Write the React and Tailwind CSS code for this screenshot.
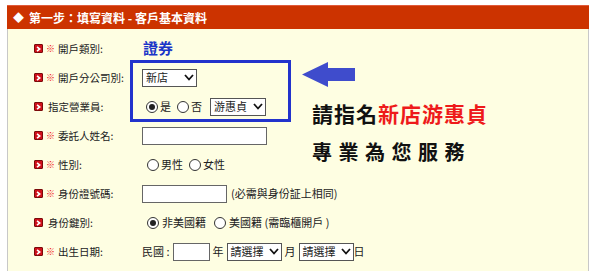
import React from "react";

const font = { fontFamily: '"Noto Sans CJK TC", "Liberation Sans", sans-serif' };

const Bullet = () => (
  <span className="inline-flex items-center justify-center w-[9px] h-[9px] bg-[#d0101a] border border-[#7a0a0a] rounded-[1px]">
    <svg width="5" height="6" viewBox="0 0 5 6">
      <path d="M1 0.8 L3.8 3 L1 5.2" stroke="#fff" strokeWidth="1.6" fill="none" />
    </svg>
  </span>
);

const Radio = ({ checked }) => (
  <span className="inline-flex items-center justify-center w-[12px] h-[12px] rounded-full border border-[#333] bg-white">
    {checked && <span className="w-[6px] h-[6px] rounded-full bg-[#222]" />}
  </span>
);

const Select = ({ text, w }) => (
  <span className={`inline-flex items-center justify-between h-[18px] border border-[#555] bg-white pl-[3px] pr-[2px] ${w}`}>
    <span className="leading-none">{text}</span>
    <svg width="10" height="7" viewBox="0 0 10 7">
      <path d="M1 1 L5 5.5 L9 1" stroke="#111" strokeWidth="1.8" fill="none" />
    </svg>
  </span>
);

const Input = ({ w }) => <span className={`inline-block h-[18px] border border-[#666] bg-white ${w}`} />;

const Row = ({ req, label, children }) => (
  <div className="flex items-center h-[29px]">
    <div className="flex items-center w-[134px] pl-[26px]">
      <Bullet />
      {req && (
        <span className="ml-[3px] w-[8px] overflow-visible text-[#f01010] text-[9px] font-bold leading-none">※</span>
      )}
      <span className={`${req ? "ml-[4px]" : "ml-[5px]"} text-[10.5px] whitespace-nowrap`}>{label}</span>
    </div>
    <div className="flex items-center">{children}</div>
  </div>
);

const App = () => {
  return (
    <div className="w-[600px] h-[271px] bg-white pt-[5px] pl-[7px] text-[11px] text-[#222] overflow-hidden" style={font}>
      <div className="w-[582px]">
        <div className="h-[24px] bg-[#cc3300] border-t border-[#e05a3a] flex items-center pl-[6px] text-white font-bold text-[12px]">
          <span className="text-[11px] mr-[5px]">◆</span>
          第一步：填寫資料 - 客戶基本資料
        </div>
        <div className="relative bg-[#fefee2] border-l border-r border-[#c8c8c8] pt-[5px] h-[250px]">
          <Row req label="開戶類別:">
            <span className="ml-[1px] text-[#1a35c8] font-bold text-[15px]">證券</span>
          </Row>
          <Row req label="開戶分公司別:">
            <Select text="新店" w="w-[55px]" />
          </Row>
          <Row label="指定營業員:">
            <span className="ml-[4px] flex items-center gap-[2px]">
              <Radio checked />是<span className="w-[2px]" /><Radio />否
              <span className="ml-[6px]"><Select text="游惠貞" w="w-[56px]" /></span>
            </span>
          </Row>
          <Row req label="委託人姓名:">
            <Input w="w-[125px]" />
          </Row>
          <Row req label="性別:">
            <span className="ml-[5px] flex items-center gap-[2px]">
              <Radio />男性<span className="w-[2px]" /><Radio />女性
            </span>
          </Row>
          <Row req label="身份證號碼:">
            <span className="flex items-center gap-[4px]">
              <Input w="w-[85px]" />
              <span>(必需與身份証上相同)</span>
            </span>
          </Row>
          <Row label="身份鍵別:">
            <span className="ml-[5px] flex items-center gap-[3px]">
              <Radio checked />非美國籍<span className="w-[2px]" /><Radio />美國籍 (需臨櫃開戶 )
            </span>
          </Row>
          <Row req label="出生日期:">
            <span className="flex items-center gap-[3px]">
              民國 : <Input w="w-[37px]" /> 年 <Select text="請選擇" w="w-[55px]" /> 月 <Select text="請選擇" w="w-[55px]" />
              <span className="-ml-[3px]">日</span>
            </span>
          </Row>

          {/* annotation overlay */}
          <div className="absolute left-[122px] top-[31px] w-[161px] h-[62px] border-[3px] border-[#2233cc]" />
          <svg className="absolute left-[294px] top-[33px]" width="54" height="26" viewBox="0 0 54 26">
            <polygon points="0,12.5 26,0 26,6 53,6 53,19 26,19 26,25" fill="#3f4ccc" />
          </svg>
          <div className="absolute left-[304px] top-[72px] text-[21px] font-semibold leading-[24px] tracking-[1px] text-[#111]">
            請指名<span className="text-[#ee1a1a]">新店游惠貞</span>
          </div>
          <div className="absolute left-[304px] top-[111px] text-[20px] font-semibold leading-[24px] tracking-[6.5px] text-[#111]">
            專業為您服務
          </div>
        </div>
      </div>
    </div>
  );
};

export default App;
